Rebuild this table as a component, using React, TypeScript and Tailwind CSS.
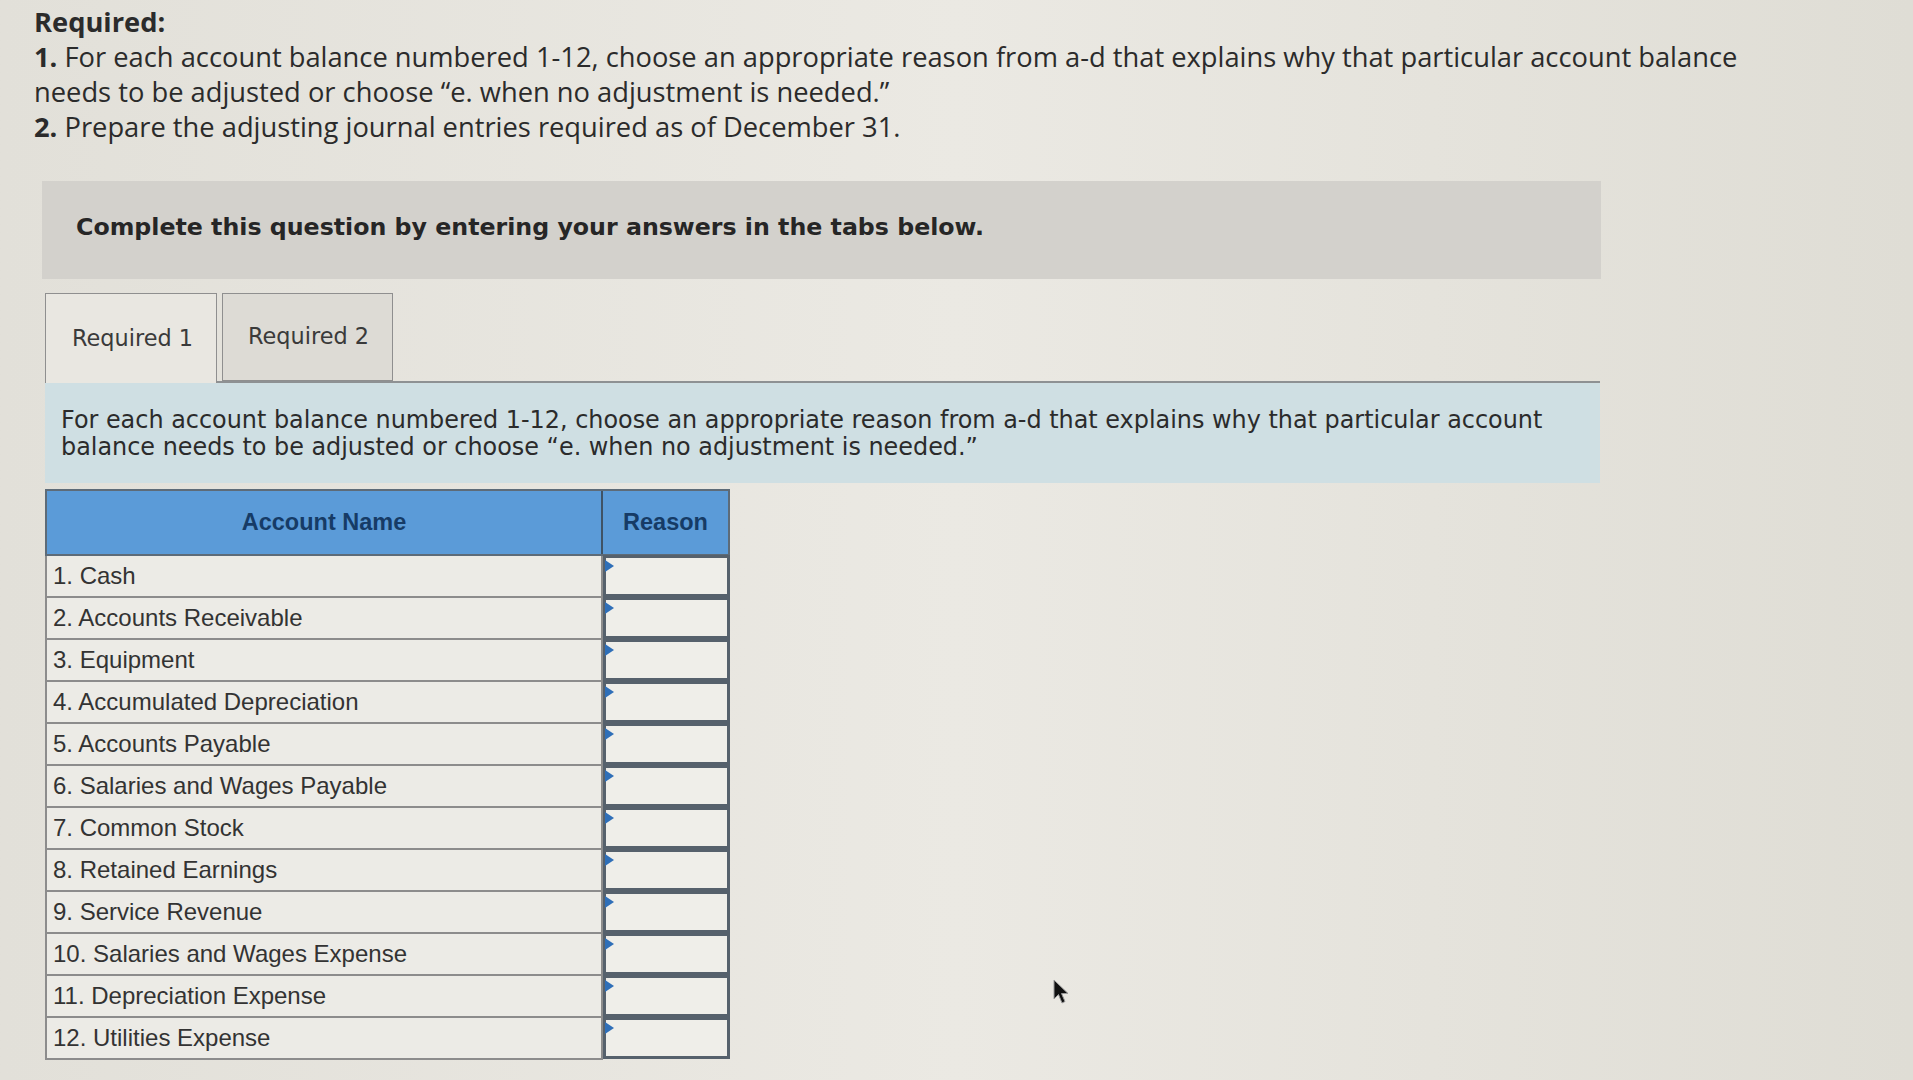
import React from 'react'

const accounts = [
  '1. Cash',
  '2. Accounts Receivable',
  '3. Equipment',
  '4. Accumulated Depreciation',
  '5. Accounts Payable',
  '6. Salaries and Wages Payable',
  '7. Common Stock',
  '8. Retained Earnings',
  '9. Service Revenue',
  '10. Salaries and Wages Expense',
  '11. Depreciation Expense',
  '12. Utilities Expense',
]

function ReasonCell() {
  return (
    <div className="relative h-[42px] border-[3px] border-[#56616c] bg-[#efeee9] -mt-[1px]">
      <div className="absolute -left-[1px] top-[2px] w-0 h-0 border-y-[6px] border-y-transparent border-l-[9px] border-l-[#2f6fb8]" />
    </div>
  )
}

export default function App() {
  return (
    <div className="relative min-h-screen w-full overflow-hidden bg-gradient-to-r from-[#e2e0d9] via-[#ebe9e3] to-[#dfddd5] pb-[20px]">
      {/* Required text */}
      <div className="w-[1765px] pl-[34px] pt-[4px] font-['Open_Sans',sans-serif] text-[27.3px] leading-[35px] text-[#2b2b2b]">
        <div className="font-bold">Required:</div>
        <div>
          <span className="font-bold">1.</span> For each account balance numbered 1-12, choose an appropriate reason from a-d that explains why that particular account balance needs to be adjusted or choose &ldquo;e. when no adjustment is needed.&rdquo;
        </div>
        <div>
          <span className="font-bold">2.</span> Prepare the adjusting journal entries required as of December 31.
        </div>
      </div>

      {/* Instruction bar */}
      <div className="ml-[42px] mt-[37px] h-[98px] w-[1559px] bg-[#d3d1cc] pl-[34px] pt-[31px] font-['DejaVu_Sans',sans-serif] text-[23.7px] font-bold leading-[30px] text-[#262626]">
        Complete this question by entering your answers in the tabs below.
      </div>

      {/* Tabs */}
      <div className="ml-[45px] mt-[14px] flex gap-[5px] font-['DejaVu_Sans',sans-serif] text-[22.4px] text-[#3a3a3a]">
        <div className="relative z-10 -mb-[2px] flex h-[90px] w-[172px] items-center border border-b-0 border-[#8f8f8f] bg-[#e9e7e1] pl-[26px]">
          Required 1
        </div>
        <div className="flex h-[88px] w-[171px] items-center border border-[#8f8f8f] bg-[#dddbd5] pl-[25px]">
          Required 2
        </div>
      </div>

      {/* Blue info box */}
      <div className="ml-[45px] w-[1555px] border-t-2 border-[#8e9193] bg-[#cfdfe3] pb-[22px] pl-[16px] pr-[16px] pt-[24px] font-['DejaVu_Sans',sans-serif] text-[23.9px] leading-[27px] text-[#2b2b2b]">
        For each account balance numbered 1-12, choose an appropriate reason from a-d that explains why that particular account balance needs to be adjusted or choose &ldquo;e. when no adjustment is needed.&rdquo;
      </div>

      {/* Table */}
      <div className="ml-[45px] mt-[6px] w-[685px] font-['Liberation_Sans',sans-serif]">
        <div className="flex h-[67px] border-2 border-[#5d6b78] bg-[#5b9bd8] text-[23.5px] font-bold text-[#163b66]">
          <div className="flex w-[556px] items-center justify-center border-r-2 border-[#3f5366]">Account Name</div>
          <div className="flex flex-1 items-center justify-center">Reason</div>
        </div>
        {accounts.map((name) => (
          <div key={name} className="flex h-[42px]">
            <div className="flex w-[558px] items-center border-x-2 border-b-2 border-[#8c8c8c] bg-[#ecebe6] pl-[6px] text-[24px] text-[#333]">
              {name}
            </div>
            <div className="flex-1">
              <ReasonCell />
            </div>
          </div>
        ))}
      </div>

      {/* Mouse cursor */}
      <svg className="absolute left-[1053px] top-[979px]" width="18" height="26" viewBox="0 0 18 26">
        <path d="M1 1 L1 20 L5.5 15.5 L9 24 L12 22.5 L8.5 14.5 L15 14.5 Z" fill="#111" stroke="#9a9a9a" strokeWidth="1" />
      </svg>
    </div>
  )
}
